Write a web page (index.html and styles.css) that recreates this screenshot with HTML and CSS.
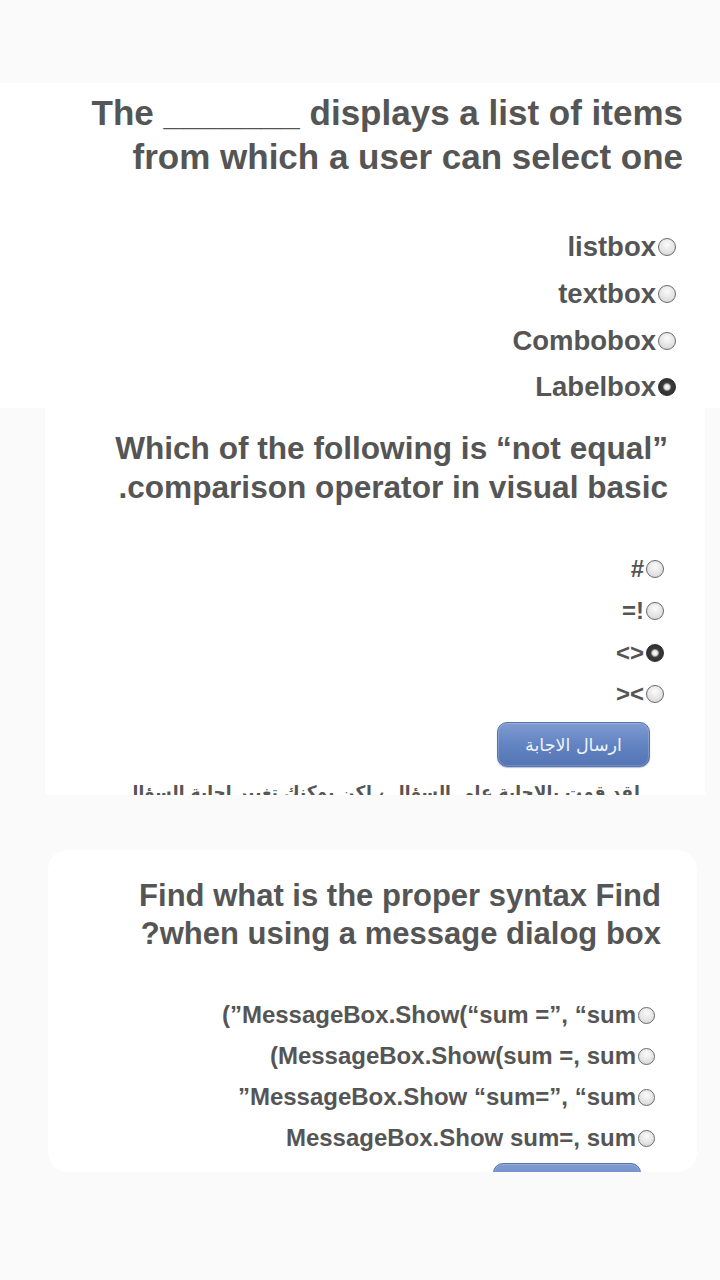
FILE: index.html
```html
<!DOCTYPE html>
<html lang="en">
<head>
<meta charset="utf-8">
<title>Quiz</title>
<link rel="stylesheet" href="styles.css">
</head>
<body>
<div class="topbar"></div>

<section class="sheet">
  <h2 class="title t1"><span class="ln">The _______ displays a list of items</span><span class="ln">from which a user can select one</span></h2>
  <ul class="opts o1">
    <li><span>listbox</span><i class="radio"></i></li>
    <li><span>textbox</span><i class="radio"></i></li>
    <li><span>Combobox</span><i class="radio"></i></li>
    <li><span>Labelbox</span><i class="radio on"></i></li>
  </ul>
</section>

<section class="card c2">
  <h2 class="title t2"><span class="ln">Which of the following is “not equal”</span><span class="ln">.comparison operator in visual basic</span></h2>
  <ul class="opts o2">
    <li><span>#</span><i class="radio"></i></li>
    <li><span>=!</span><i class="radio"></i></li>
    <li><span>&lt;&gt;</span><i class="radio on"></i></li>
    <li><span>&gt;&lt;</span><i class="radio"></i></li>
  </ul>
  <div class="btnrow b2"><button class="send" dir="rtl">ارسال الاجابة</button></div>
  <p class="status" dir="rtl">لقد قمت بالاجابة على السؤال ، لكن يمكنك تغيير اجابة السؤال</p>
</section>

<section class="card c3">
  <h2 class="title t3"><span class="ln">Find what is the proper syntax Find</span><span class="ln">?when using a message dialog box</span></h2>
  <ul class="opts o3">
    <li><span>(”MessageBox.Show(“sum =”, “sum</span><i class="radio"></i></li>
    <li><span>(MessageBox.Show(sum =, sum</span><i class="radio"></i></li>
    <li><span>”MessageBox.Show “sum=”, “sum</span><i class="radio"></i></li>
    <li><span>MessageBox.Show sum=, sum</span><i class="radio"></i></li>
  </ul>
  <div class="btnrow b3"><button class="send" dir="rtl">ارسال الاجابة</button></div>
</section>
</body>
</html>
```

FILE: styles.css
```css
html, body {
  margin: 0;
  padding: 0;
}
body {
  width: 720px;
  height: 1280px;
  overflow: hidden;
  background: #fafafa;
  font-family: "Liberation Sans", Arial, sans-serif;
  color: #555;
}

.topbar {
  height: 83px;
}

.title {
  margin: 0;
  font-weight: bold;
  text-align: right;
  display: flex;
  flex-direction: column;
  align-items: flex-end;
}
.ln {
  white-space: nowrap;
}

.opts {
  list-style: none;
  margin: 0;
  padding: 0;
  display: flex;
  flex-direction: column;
  align-items: flex-end;
}
.opts li {
  display: flex;
  align-items: center;
  gap: 2px;
  font-weight: bold;
  white-space: nowrap;
}

.radio {
  flex: none;
  display: block;
  width: 17px;
  height: 17px;
  box-sizing: border-box;
  border-radius: 50%;
  border: 1.5px solid #6a6a6a;
  background: radial-gradient(circle at 50% 35%, #fbfbfb 0, #e4e4e4 55%, #cfcfcf 100%);
}
.radio.on {
  border-color: #2e2e2e;
  background: radial-gradient(circle at 50% 50%, #ffffff 0, #e8e8e8 2.4px, #9a9a9a 3.4px, #3c3c3c 4.4px, #242424 100%);
}

/* Question 1 */
.sheet {
  height: 325px;
  box-sizing: border-box;
  padding: 8px 37px 0 0;
  background: #fff;
  overflow: hidden;
}
.t1 {
  font-size: 35px;
  line-height: 44px;
}
.o1 {
  margin-top: 45px;
  padding-right: 7px;
}
.o1 li {
  height: 46.7px;
  font-size: 27.5px;
}
.o1 .radio {
  width: 18px;
  height: 18px;
}

/* Cards */
.card {
  background: #fff;
  box-sizing: border-box;
  overflow: hidden;
}

.c2 {
  margin-left: 45px;
  width: 660px;
  height: 387px;
  padding: 21px 37px 0 0;
}
.t2 {
  font-size: 31.6px;
  line-height: 39px;
}
.o2 {
  margin-top: 41.5px;
  padding-right: 4px;
}
.o2 li {
  height: 41.7px;
  font-size: 24px;
}
.o2 .radio {
  width: 18px;
  height: 18px;
}

.btnrow {
  display: flex;
  justify-content: flex-end;
}
.b2 {
  margin-top: 7px;
  padding-right: 18px;
}
.b2 .send {
  width: 153px;
}
.send {
  height: 45px;
  box-sizing: border-box;
  border-radius: 10px;
  border: 1.5px solid #5673b0;
  box-shadow: inset 0 0 0 1px rgba(255, 255, 255, 0.18), 0 1px 1px rgba(60, 80, 130, 0.35);
  background: linear-gradient(#7f9bd0, #6384c2 50%, #5474b4);
  color: #eef2fa;
  font-family: "DejaVu Sans", sans-serif;
  font-size: 17.5px;
  padding: 0;
}

.status {
  margin: 10px 28px 0 0;
  font-family: "DejaVu Sans", sans-serif;
  font-weight: bold;
  font-size: 17px;
  line-height: 30px;
  color: #555;
  text-align: right;
  white-space: nowrap;
}

.c3 {
  margin-top: 55px;
  margin-left: 48px;
  width: 649px;
  height: 322px;
  padding: 27px 36px 0 0;
  border-radius: 20px;
}
.t3 {
  font-size: 31px;
  line-height: 38px;
}
.o3 {
  margin-top: 41.5px;
  padding-right: 6px;
}
.o3 li {
  height: 41px;
  font-size: 24px;
}
.b3 {
  margin-top: 4.5px;
  padding-right: 20px;
}
.b3 .send {
  width: 148px;
}
```
